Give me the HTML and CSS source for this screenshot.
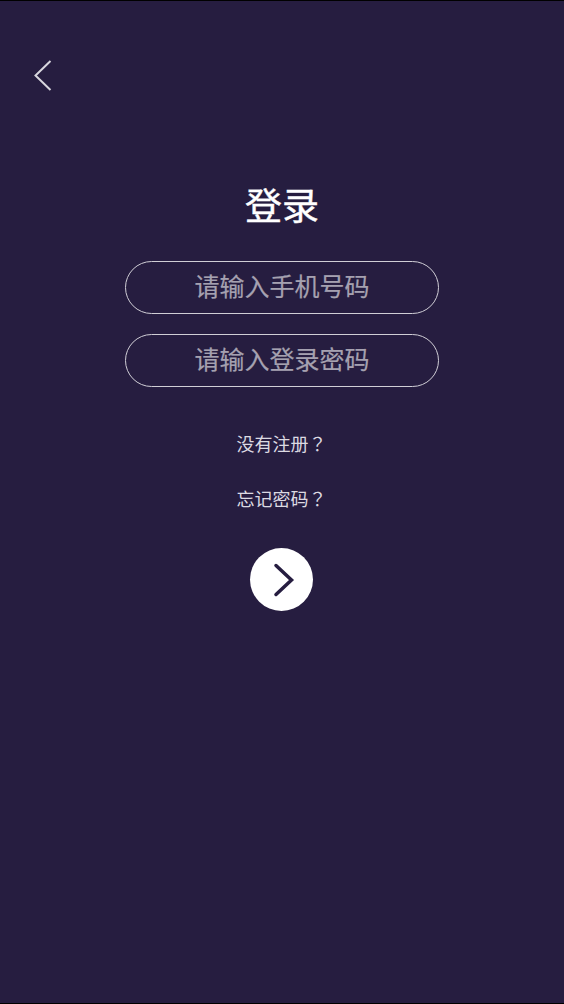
FILE: index.html
```html
<!DOCTYPE html>
<html lang="zh-CN">
<head>
    <meta charset="UTF-8">
    <meta name="viewport" content="width=device-width, initial-scale=1.0">
    <title>登录</title>
    <link rel="stylesheet" href="styles.css">
</head>
<body>
    <div class="page">
        <div class="top-bar">
            <svg class="back-icon" width="18" height="32" viewBox="0 0 18 32">
                <path d="M16.5 1 L1.5 15.5 L16.5 30" fill="none" stroke="#d8d6de" stroke-width="2"/>
            </svg>
        </div>
        <h1 class="title">登录</h1>
        <div class="field">请输入手机号码</div>
        <div class="field field-second">请输入登录密码</div>
        <div class="link link-first" lang="zh-TW">没有注册？</div>
        <div class="link link-second" lang="zh-TW">忘记密码？</div>
        <div class="next-button">
            <svg class="next-icon" width="22" height="34" viewBox="0 0 22 34">
                <path d="M3 2.5 L18.5 17 L3 31.5" fill="none" stroke="#261d40" stroke-width="3.5" stroke-linecap="round" stroke-linejoin="miter"/>
            </svg>
        </div>
    </div>
</body>
</html>
```

FILE: styles.css
```css
html, body {
    margin: 0;
    padding: 0;
}
body {
    background-color: #000;
    font-family: "Roboto", "Noto Sans CJK SC", sans-serif;
}
.page {
    box-sizing: border-box;
    height: 1002px;
    margin-top: 1px;
    margin-bottom: 1px;
    background-color: #261d40;
    display: flex;
    flex-direction: column;
    align-items: center;
    color: #fff;
}
.top-bar {
    align-self: stretch;
    height: 90px;
    padding: 59px 0 0 34px;
    box-sizing: border-box;
}
.back-icon {
    display: block;
}
.title {
    margin: 94px 0 0;
    font-size: 37px;
    font-weight: 400;
    line-height: 46px;
    color: #fff;
    -webkit-text-stroke: 0.4px #fff;
}
.field {
    box-sizing: border-box;
    width: 314px;
    height: 53px;
    margin-top: 30px;
    border: 1px solid #d0ced6;
    border-radius: 27px;
    color: #a5a1b0;
    font-size: 25px;
    line-height: 51px;
    text-align: center;
    -webkit-text-stroke: 0.2px #a5a1b0;
}
.field-second {
    margin-top: 20px;
}
.link {
    font-family: "Roboto", "Noto Sans CJK TC", sans-serif;
    font-size: 18px;
    line-height: 26px;
    margin-right: 1px;
    color: #dcdae2;
    text-align: center;
}
.link-first {
    margin-top: 45px;
}
.link-second {
    margin-top: 29px;
}
.next-button {
    width: 63px;
    height: 63px;
    margin-top: 35px;
    margin-right: 1px;
    border-radius: 50%;
    background-color: #fff;
    display: flex;
    align-items: center;
    justify-content: center;
}
.next-icon {
    margin-left: 4px;
}
```
